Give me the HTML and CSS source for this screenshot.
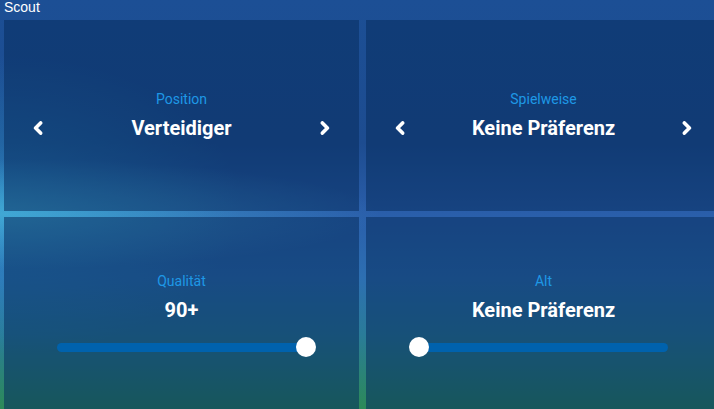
FILE: index.html
```html
<!DOCTYPE html>
<html lang="de">
<head>
<meta charset="utf-8">
<title>Scout</title>
<link rel="stylesheet" href="styles.css">
</head>
<body>
<div class="header">Scout</div>
<div class="grid">
  <section class="panel">
    <div class="label">Position</div>
    <div class="picker">
      <svg class="chev" viewBox="0 0 10 14" width="10" height="14"><polyline points="7.6,1.9 2.6,7 7.6,12.1"/></svg>
      <div class="value">Verteidiger</div>
      <svg class="chev" viewBox="0 0 10 14" width="10" height="14"><polyline points="2.4,1.9 7.4,7 2.4,12.1"/></svg>
    </div>
  </section>
  <section class="panel">
    <div class="label">Spielweise</div>
    <div class="picker">
      <svg class="chev" viewBox="0 0 10 14" width="10" height="14"><polyline points="7.6,1.9 2.6,7 7.6,12.1"/></svg>
      <div class="value">Keine Präferenz</div>
      <svg class="chev" viewBox="0 0 10 14" width="10" height="14"><polyline points="2.4,1.9 7.4,7 2.4,12.1"/></svg>
    </div>
  </section>
  <section class="panel panel-low">
    <div class="label">Qualität</div>
    <div class="value">90+</div>
    <div class="slider"><div class="track"><div class="thumb" style="left: 100%"></div></div></div>
  </section>
  <section class="panel panel-low">
    <div class="label">Alt</div>
    <div class="value">Keine Präferenz</div>
    <div class="slider"><div class="track"><div class="thumb" style="left: 0%"></div></div></div>
  </section>
</div>
</body>
</html>
```
FILE: styles.css
```css
html, body {
  margin: 0;
  padding: 0;
}
body {
  width: 714px;
  height: 409px;
  overflow: hidden;
  font-family: Roboto, "Liberation Sans", sans-serif;
  color: #fff;
  background:
    radial-gradient(ellipse 380px 55px at 0 214px, rgba(80, 200, 230, 0.55), rgba(80, 200, 230, 0) 100%),
    radial-gradient(ellipse 240px 150px at 0 205px, rgba(50, 170, 215, 0.45), rgba(50, 170, 215, 0) 100%),
    linear-gradient(180deg, #1c4f95 0%, #1d4c90 35%, #2a5eaa 52%, #2d6fb2 68%, #2a7c98 82%, #2c8a58 100%);
}
.header {
  height: 20px;
  padding-left: 4px;
  font-family: "Liberation Sans", Arial, sans-serif;
  font-size: 14px;
  line-height: 14px;
  color: #fff;
}
.grid {
  display: grid;
  grid-template-columns: 355px 355px;
  grid-template-rows: 191px 192px;
  column-gap: 7px;
  row-gap: 6px;
  padding-left: 4px;
}
.panel {
  background: rgba(8, 45, 95, 0.55);
  padding-top: 71px;
  text-align: center;
  box-sizing: border-box;
}
.panel-low {
  padding-top: 56px;
}
.label {
  font-size: 14px;
  line-height: 16px;
  font-weight: 400;
  color: #1e98e6;
}
.value {
  margin-top: 9px;
  font-size: 20px;
  line-height: 24px;
  font-weight: 700;
  color: #fff;
}
.picker {
  display: flex;
  align-items: center;
  justify-content: space-between;
  padding: 0 29px;
  margin-top: 9px;
}
.picker .value {
  margin-top: 0;
}
.chev {
  display: block;
}
.chev polyline {
  fill: none;
  stroke: #fff;
  stroke-width: 3.6;
  stroke-linecap: round;
  stroke-linejoin: round;
}
.slider {
  height: 20px;
  margin: 15px 53px 0;
  display: flex;
  align-items: center;
}
.track {
  position: relative;
  flex: 1;
  height: 9px;
  border-radius: 5px;
  background: #0062ad;
}
.thumb {
  position: absolute;
  top: -6px;
  width: 20px;
  height: 20px;
  margin-left: -10px;
  border-radius: 50%;
  background: #fff;
}
```
